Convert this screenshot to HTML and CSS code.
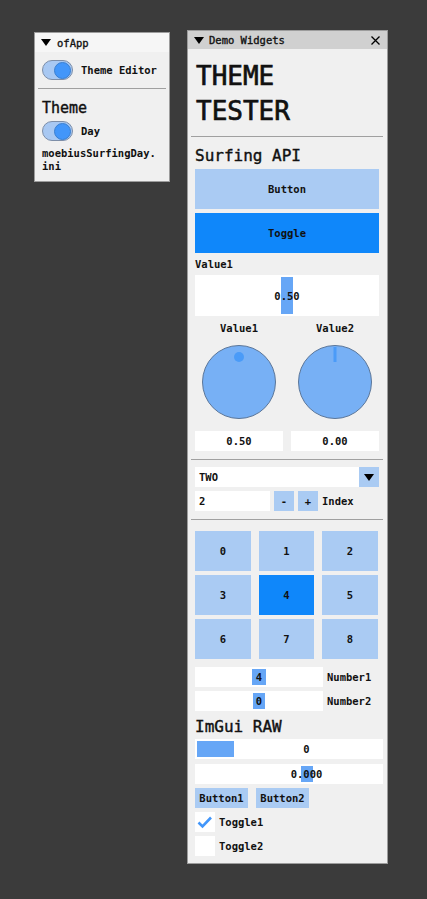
FILE: index.html
```html
<!DOCTYPE html>
<html>
<head>
<meta charset="utf-8">
<link rel="stylesheet" href="styles.css">
</head>
<body>
<div class="win win-app">
  <div class="title title-app">
    <svg class="tri" width="10" height="7" viewBox="0 0 10 7"><polygon points="0,0 10,0 5,7" fill="#000"/></svg>
    <span>ofApp</span>
  </div>
  <div class="app-body">
    <div class="trow">
      <div class="tog"><div class="tog-knob"></div></div>
      <span class="lbl">Theme Editor</span>
    </div>
    <div class="sep-app"></div>
    <div class="h-theme">Theme</div>
    <div class="trow trow2">
      <div class="tog"><div class="tog-knob"></div></div>
      <span class="lbl">Day</span>
    </div>
    <div class="fname">moebiusSurfingDay.<br>ini</div>
  </div>
</div>

<div class="win win-demo">
  <div class="title title-demo">
    <svg class="tri" width="10" height="7" viewBox="0 0 10 7"><polygon points="0,0 10,0 5,7" fill="#000"/></svg>
    <span>Demo Widgets</span>
    <svg class="close" width="9" height="9" viewBox="0 0 9 9"><path d="M0.5 0.5 L8.5 8.5 M8.5 0.5 L0.5 8.5" stroke="#000" stroke-width="1.3"/></svg>
  </div>
  <div class="content">
    <div class="big">THEME<br>TESTER</div>
    <div class="sep sep1"></div>
    <div class="h2 h-surf">Surfing API</div>
    <div class="bigbtn btn-light">Button</div>
    <div class="bigbtn btn-dark">Toggle</div>
    <div class="lbl lbl-val">Value1</div>
    <div class="frame slider-big">
      <div class="grab grab-big"></div>
      <span class="ftext">0.50</span>
    </div>
    <div class="knobs">
      <div class="knob-col">
        <div class="lbl knob-lbl">Value1</div>
        <svg class="knob" width="76" height="76" viewBox="0 0 76 76">
          <circle cx="38" cy="38" r="36.5" fill="#77b0f5" stroke="#5b7699" stroke-width="1"/>
          <circle cx="38" cy="13" r="5" fill="#4a9bf8"/>
        </svg>
        <div class="frame vbox">0.50</div>
      </div>
      <div class="knob-col">
        <div class="lbl knob-lbl">Value2</div>
        <svg class="knob" width="76" height="76" viewBox="0 0 76 76">
          <circle cx="38" cy="38" r="36.5" fill="#77b0f5" stroke="#5b7699" stroke-width="1"/>
          <line x1="38" y1="3" x2="38" y2="18" stroke="#4a9bf8" stroke-width="3"/>
        </svg>
        <div class="frame vbox">0.00</div>
      </div>
    </div>
    <div class="sep sep2"></div>
    <div class="combo">
      <span class="combo-text">TWO</span>
      <div class="combo-arrow"><svg width="10" height="7" viewBox="0 0 10 7"><polygon points="0,0 10,0 5,7" fill="#000"/></svg></div>
    </div>
    <div class="idx-row">
      <div class="frame inp">2</div>
      <div class="sbtn btn-light">-</div>
      <div class="sbtn btn-light">+</div>
      <span class="lbl">Index</span>
    </div>
    <div class="sep sep3"></div>
    <div class="grid">
      <div class="cell btn-light">0</div>
      <div class="cell btn-light">1</div>
      <div class="cell btn-light">2</div>
      <div class="cell btn-light">3</div>
      <div class="cell btn-dark">4</div>
      <div class="cell btn-light">5</div>
      <div class="cell btn-light">6</div>
      <div class="cell btn-light">7</div>
      <div class="cell btn-light">8</div>
    </div>
    <div class="num-row num1">
      <div class="frame numslider"><span class="numgrab g1">4</span></div>
      <span class="lbl">Number1</span>
    </div>
    <div class="num-row num2">
      <div class="frame numslider"><span class="numgrab g2">0</span></div>
      <span class="lbl">Number2</span>
    </div>
    <div class="h2 h-raw">ImGui RAW</div>
    <div class="frame raw raw-int">
      <div class="grab grab-int"></div>
      <div class="rawtext">0</div>
    </div>
    <div class="frame raw raw-float">
      <div class="grab grab-float"></div>
      <div class="rawtext">0.000</div>
    </div>
    <div class="rbtns">
      <div class="rbtn btn-light">Button1</div>
      <div class="rbtn btn-light">Button2</div>
    </div>
    <div class="chk-row chk1">
      <div class="chk"><svg width="20" height="20" viewBox="0 0 20 20"><path d="M3.5 10.5 L7.5 14.5 L16 5.5" fill="none" stroke="#4296fa" stroke-width="2.6"/></svg></div>
      <span class="lbl">Toggle1</span>
    </div>
    <div class="chk-row chk2">
      <div class="chk"></div>
      <span class="lbl">Toggle2</span>
    </div>
  </div>
</div>
</body>
</html>
```
FILE: styles.css
```css
html, body {
  margin: 0;
  padding: 0;
}
body {
  width: 427px;
  height: 899px;
  background: #3b3b3b;
  position: relative;
  overflow: hidden;
  font-family: "DejaVu Sans Mono", "Liberation Mono", monospace;
  font-size: 10.5px;
  color: #111;
}
.win {
  position: absolute;
  box-sizing: border-box;
  background: #f0f0f0;
  border: 1px solid #9c9c9c;
}
.win-app {
  left: 34px;
  top: 32px;
  width: 136px;
  height: 150px;
}
.win-demo {
  left: 187px;
  top: 30px;
  width: 201px;
  height: 834px;
}
.title {
  display: flex;
  align-items: center;
  font-size: 10.5px;
  color: #111;
  -webkit-text-stroke: 0.35px #111;
}
.title-app {
  height: 19px;
  background: #f6f6f6;
  padding-left: 6px;
  gap: 6px;
}
.title-demo {
  height: 18px;
  background: #d0d0d0;
  padding-left: 6px;
  gap: 5px;
}
.tri {
  display: block;
  flex: none;
}
.close {
  display: block;
  margin-left: auto;
  margin-right: 7px;
}
.lbl {
  font-weight: bold;
  line-height: 13px;
}
/* ofApp window */
.app-body {
  padding: 8px 7px 0 7px;
  display: flex;
  flex-direction: column;
}
.trow {
  display: flex;
  align-items: center;
  gap: 8px;
  height: 20px;
}
.trow2 {
  margin-top: 4px;
}
.tog {
  box-sizing: border-box;
  width: 31px;
  height: 20px;
  border-radius: 10px;
  background: #a8c8f2;
  border: 1px solid #7d8ea8;
  position: relative;
  flex: none;
}
.tog-knob {
  position: absolute;
  right: 1px;
  top: 0.5px;
  width: 17px;
  height: 17px;
  box-sizing: border-box;
  border-radius: 50%;
  background: #4296fa;
  border: 1px solid #3a7fd0;
}
.sep-app {
  height: 1px;
  background: #a0a0a0;
  margin-top: 8px;
  margin-left: -4px;
  width: 128px;
}
.h-theme {
  font-size: 15px;
  line-height: 18px;
  margin-top: 10px;
  -webkit-text-stroke: 0.4px #111;
}
.fname {
  font-weight: bold;
  line-height: 13px;
  margin-top: 6px;
}
/* Demo window */
.content {
  padding: 0 8px 0 7px;
  display: flex;
  flex-direction: column;
}
.big {
  font-size: 26px;
  line-height: 35px;
  margin-top: 10px;
  padding-left: 1px;
  -webkit-text-stroke: 0.7px #111;
}
.sep {
  height: 1px;
  background: #a0a0a0;
  margin-left: -4px;
  margin-right: -4px;
}
.sep1 { margin-top: 7px; }
.sep2 { margin-top: 8px; }
.sep3 { margin-top: 8px; }
.h2 {
  font-size: 16px;
  line-height: 19px;
  -webkit-text-stroke: 0.4px #111;
}
.h-surf { margin-top: 9px; }
.h-raw { margin-top: 6px; }
.btn-light { background: #aacbf3; }
.btn-dark { background: #0f87fa; }
.bigbtn {
  height: 40px;
  margin-top: 4px;
  display: flex;
  align-items: center;
  justify-content: center;
  font-weight: bold;
}
.lbl-val {
  margin-top: 5px;
}
.frame {
  background: #ffffff;
  position: relative;
  font-weight: bold;
}
.slider-big {
  height: 41px;
  margin-top: 4px;
  display: flex;
  align-items: center;
  justify-content: center;
}
.grab {
  position: absolute;
  background: #66a6f6;
}
.grab-big {
  left: 86px;
  width: 12px;
  top: 2px;
  bottom: 2px;
}
.ftext {
  position: relative;
}
.knobs {
  display: grid;
  grid-template-columns: 88px 88px;
  column-gap: 8px;
  margin-top: 6px;
}
.knob-col {
  display: flex;
  flex-direction: column;
  align-items: center;
}
.knob-lbl {
  text-align: center;
}
.knob {
  display: block;
  margin-top: 9px;
}
.vbox {
  width: 100%;
  height: 20px;
  margin-top: 11px;
  display: flex;
  align-items: center;
  justify-content: center;
}
.combo {
  height: 20px;
  margin-top: 7px;
  background: #ffffff;
  display: flex;
  align-items: center;
  font-weight: bold;
}
.combo-text {
  padding-left: 4px;
}
.combo-arrow {
  margin-left: auto;
  width: 20px;
  height: 20px;
  background: #aacbf3;
  display: flex;
  align-items: center;
  justify-content: center;
}
.combo-arrow svg { display: block; }
.idx-row {
  display: flex;
  align-items: center;
  gap: 4px;
  margin-top: 4px;
  height: 20px;
}
.inp {
  width: 75px;
  height: 20px;
  box-sizing: border-box;
  padding-left: 4px;
  display: flex;
  align-items: center;
}
.sbtn {
  width: 20px;
  height: 20px;
  display: flex;
  align-items: center;
  justify-content: center;
  font-weight: bold;
}
.grid {
  display: grid;
  grid-template-columns: 56px 55px 56px;
  grid-auto-rows: 40px;
  column-gap: 8px;
  row-gap: 4px;
  margin-top: 11px;
}
.cell {
  display: flex;
  align-items: center;
  justify-content: center;
  font-weight: bold;
}
.num-row {
  display: flex;
  align-items: center;
  gap: 4px;
  height: 20px;
}
.num1 { margin-top: 8px; }
.num2 { margin-top: 4px; }
.numslider {
  width: 128px;
  height: 20px;
  display: flex;
  align-items: center;
  justify-content: center;
}
.numgrab {
  background: #66a6f6;
  height: 16px;
  line-height: 16px;
  text-align: center;
}
.g1 { width: 14px; }
.g2 { width: 12px; }
.raw {
  width: 188px;
  height: 20px;
  overflow: hidden;
}
.raw-int { margin-top: 3px; }
.raw-float { margin-top: 5px; }
.rawtext {
  position: relative;
  width: 223px;
  height: 20px;
  line-height: 20px;
  text-align: center;
}
.grab-int {
  left: 2px;
  width: 37px;
  top: 2px;
  bottom: 2px;
}
.grab-float {
  left: 106px;
  width: 12px;
  top: 2px;
  bottom: 2px;
}
.rbtns {
  display: flex;
  gap: 8px;
  margin-top: 4px;
}
.rbtn {
  width: 53px;
  height: 20px;
  display: flex;
  align-items: center;
  justify-content: center;
  font-weight: bold;
}
.chk-row {
  display: flex;
  align-items: center;
  gap: 4px;
  margin-top: 4px;
}
.chk {
  width: 20px;
  height: 20px;
  background: #ffffff;
}
.chk svg { display: block; }
```
